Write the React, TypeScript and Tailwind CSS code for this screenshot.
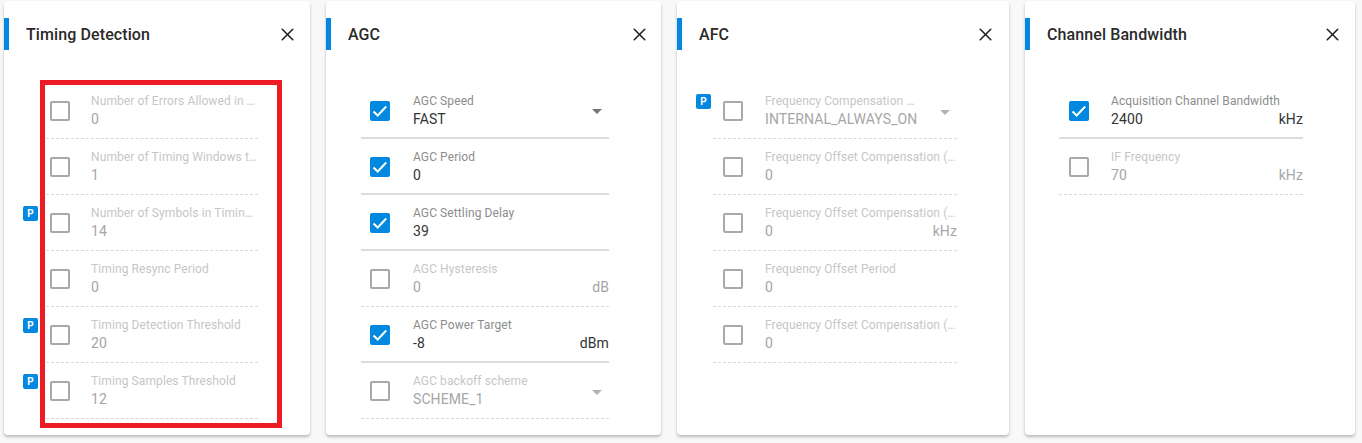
import { X } from 'lucide-react';

interface Field {
    label: string;
    value: string;
    checked?: boolean;
    unit?: string;
    select?: boolean;
    badge?: boolean;
}

interface PanelProps {
    title: string;
    fields: Field[];
    className: string;
    listClassName: string;
    rowClassName: string;
    textClassName: string;
    closeClassName: string;
    children?: React.ReactNode;
}

const timingFields: Field[] = [
    { label: 'Number of Errors Allowed in Timing Window', value: '0' },
    { label: 'Number of Timing Windows to Average', value: '1' },
    { label: 'Number of Symbols in Timing Window', value: '14', badge: true },
    { label: 'Timing Resync Period', value: '0' },
    { label: 'Timing Detection Threshold', value: '20', badge: true },
    { label: 'Timing Samples Threshold', value: '12', badge: true },
];

const agcFields: Field[] = [
    { label: 'AGC Speed', value: 'FAST', checked: true, select: true },
    { label: 'AGC Period', value: '0', checked: true },
    { label: 'AGC Settling Delay', value: '39', checked: true },
    { label: 'AGC Hysteresis', value: '0', unit: 'dB' },
    { label: 'AGC Power Target', value: '-8', unit: 'dBm', checked: true },
    { label: 'AGC backoff scheme', value: 'SCHEME_1', select: true },
];

const afcFields: Field[] = [
    { label: 'Frequency Compensation Mode', value: 'INTERNAL_ALWAYS_ON', select: true, badge: true },
    { label: 'Frequency Offset Compensation (Alpha)', value: '0' },
    { label: 'Frequency Offset Compensation (Limit)', value: '0', unit: 'kHz' },
    { label: 'Frequency Offset Period', value: '0' },
    { label: 'Frequency Offset Compensation (Beta)', value: '0' },
];

const bandwidthFields: Field[] = [
    { label: 'Acquisition Channel Bandwidth', value: '2400', unit: 'kHz', checked: true },
    { label: 'IF Frequency', value: '70', unit: 'kHz' },
];

function Checkbox({ checked }: { checked?: boolean }) {
    if (checked) {
        return (
            <div className="flex h-5 w-5 items-center justify-center rounded-[2px] bg-[#0288e0]">
                <svg className="h-5 w-5" viewBox="0 0 20 20" fill="none">
                    <path d="M3.5 10.5l4.2 4 8.5-9" stroke="#ffffff" strokeWidth="2" />
                </svg>
            </div>
        );
    }
    return <div className="h-5 w-5 rounded-[2px] border-2 border-[#a8a8a8]" />;
}

function Row({ field, className, textClassName }: { field: Field; className: string; textClassName: string }) {
    const on = field.checked;
    return (
        <div
            className={`flex h-14 items-center ${className} ${on ? 'border-b-2 border-solid border-[#dcdcdc]' : 'border-b border-dashed border-[#d8d8d8]'}`}
        >
            <div className="relative mt-[1px] shrink-0">
                {field.badge && (
                    <div className="absolute left-[-27px] top-[-7px] flex h-[15px] w-[15px] items-center justify-center rounded-[2px] bg-[#0288e0] text-[10px] font-bold leading-none text-white">
                        P
                    </div>
                )}
                <Checkbox checked={on} />
            </div>
            <div className={`min-w-0 flex-1 ${on ? 'mb-[1px]' : 'mb-[2px]'} ${textClassName}`}>
                <div className={`truncate text-xs leading-[18px] ${on ? 'text-[#8c8c8c]' : 'text-[#c6c6c6]'}`}>
                    {field.label}
                </div>
                <div className="flex items-center justify-between text-sm leading-[18px]">
                    <span className={on ? 'text-[#333333]' : 'text-[#a6a6a6]'}>{field.value}</span>
                    {field.unit && <span className={on ? 'text-[#333333]' : 'text-[#a6a6a6]'}>{field.unit}</span>}
                </div>
            </div>
            {field.select && (
                <div
                    className={`ml-[18px] mr-[7px] mt-[3px] h-0 w-0 shrink-0 border-x-[5px] border-t-[5px] border-x-transparent ${on ? 'border-t-[#757575]' : 'border-t-[#b4b4b4]'}`}
                />
            )}
        </div>
    );
}

function Panel({ title, fields, className, listClassName, rowClassName, textClassName, closeClassName, children }: PanelProps) {
    return (
        <div className={`relative h-[434px] shrink-0 rounded-[4px] bg-white shadow-[0_2px_3px_rgba(0,0,0,0.25)] ${className}`}>
            <div className="mt-[17px] flex h-[32px] items-center justify-between border-l-[5px] border-[#0288e0]">
                <span className="ml-[17px] mt-[1px] text-base font-medium text-[#2a2a2a]">{title}</span>
                <X className={closeClassName} size={21} strokeWidth={1.8} color="#222222" />
            </div>
            <div className={`mt-[33px] ${listClassName}`}>
                {fields.map((f) => (
                    <Row key={f.label} field={f} className={rowClassName} textClassName={textClassName} />
                ))}
            </div>
            {children}
        </div>
    );
}

export default function App() {
    return (
        <div className="flex h-[443px] gap-4 overflow-hidden bg-[#f8f8f8] pl-1 pt-[1px] font-['Roboto',sans-serif] tracking-[0.1px]">
            <Panel
                title="Timing Detection"
                fields={timingFields}
                className="w-[306px]"
                listClassName="ml-[42px] w-[212px]"
                rowClassName="pl-[4px]"
                textClassName="ml-[21px]"
                closeClassName="mr-[12px]"
            >
                <div className="absolute left-[36px] top-[79px] h-[348px] w-[242px] border-[5px] border-[#ed1c24]" />
            </Panel>
            <Panel
                title="AGC"
                fields={agcFields}
                className="w-[335px]"
                listClassName="ml-[35px] w-[248px]"
                rowClassName="pl-[9px]"
                textClassName="ml-[23px]"
                closeClassName="mr-[11px]"
            />
            <Panel
                title="AFC"
                fields={afcFields}
                className="w-[332px]"
                listClassName="ml-[36px] w-[244px]"
                rowClassName="pl-[10px]"
                textClassName="ml-[22px]"
                closeClassName="mr-[13px]"
            />
            <Panel
                title="Channel Bandwidth"
                fields={bandwidthFields}
                className="w-[330px]"
                listClassName="ml-[34px] w-[244px]"
                rowClassName="pl-[10px]"
                textClassName="ml-[22px]"
                closeClassName="mr-[12px]"
            />
        </div>
    );
}
